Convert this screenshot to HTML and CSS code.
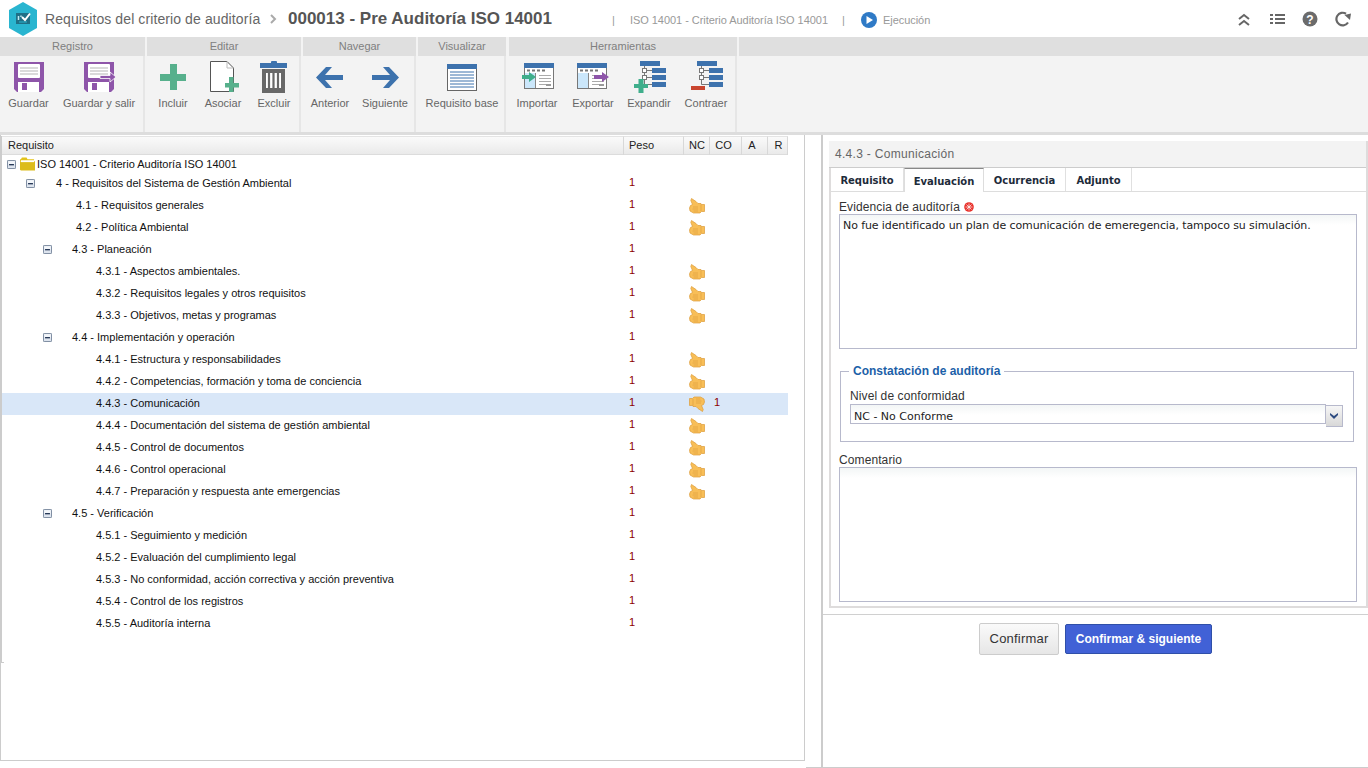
FILE: index.html
```html
<!DOCTYPE html>
<html lang="es">
<head>
<meta charset="utf-8">
<title>Requisitos del criterio de auditoría</title>
<link rel="stylesheet" href="styles.css">
</head>
<body>
<svg class="defs" aria-hidden="true">
  <symbol id="thumb" viewBox="0 0 16 16">
    <path d="M2.5 .5 L7 3.5 L9 5.5 H12 V6.5 H15.5 V13.5 H12.5 L11 15 H4.5 L1 13 L.5 10 L1.500 7.500 L3.500 6.500 L1.800 2.500 Z" fill="#f8be57" stroke="#dd9c3a" stroke-width=".7"/>
    <path d="M4 9 H9 M3.500 11 H9 M4.500 13 H9 M12 7 V13" stroke="#e0a23f" stroke-width=".7" fill="none"/>
  </symbol>
  <symbol id="minus" viewBox="0 0 11 11">
    <rect x=".5" y=".5" width="10" height="10" rx="1" fill="#dde4ee" stroke="#5d6f88"/>
    <rect x="1.500" y="1.500" width="8" height="4" fill="#f3f6fa"/>
    <rect x="2.500" y="5" width="6" height="1.500" fill="#16294a"/>
  </symbol>
  <symbol id="floppy" viewBox="0 0 30 30">
    <path d="M0 0 H30 V27 L27 30 H3 L0 27 Z" fill="#8e55a9"/>
    <rect x="4" y="2" width="22" height="14" rx="1" fill="#fff"/>
    <path d="M6 6 H24 M6 9 H24 M6 12 H24" stroke="#b5b5b5"/>
    <rect x="4" y="20" width="21" height="10" fill="#fff"/>
    <rect x="8" y="21" width="5" height="7" fill="#8e55a9"/>
  </symbol>
  <symbol id="grid" viewBox="0 0 30 26">
    <rect x=".5" y=".5" width="29" height="25" fill="#fff" stroke="#777"/>
    <rect x="0" y="0" width="30" height="5" fill="#3d72ad"/>
    <path d="M3 7.500 H6 M8 7.500 H11 M13 7.500 H16 M18 7.500 H21" stroke="#777" stroke-width="2"/>
    <rect x="1" y="10" width="10" height="15" fill="#cbe7fb"/>
    <path d="M11.500 10 V25" stroke="#888"/>
    <path d="M15 12.500 H27 M15 15.500 H27 M15 18.500 H27 M15 21.500 H22" stroke="#aaa"/>
    <rect x="22" y="21" width="5" height="2" fill="#999"/>
  </symbol>
  <symbol id="tree" viewBox="0 0 26 28">
    <rect x="0" y="0" width="20" height="5" fill="#3d72ad"/>
    <path d="M4.500 5 V23.500 M4.500 9.500 H12 M4.500 16.500 H12 M4.500 23.500 H12" stroke="#777" fill="none"/>
    <rect x="2.500" y="7.500" width="4" height="4" fill="#fff" stroke="#777"/>
    <rect x="2.500" y="14.500" width="4" height="4" fill="#fff" stroke="#777"/>
    <rect x="12" y="7" width="14" height="5" fill="#3d72ad"/>
    <rect x="12" y="14" width="14" height="5" fill="#3d72ad"/>
    <rect x="12" y="21" width="14" height="5" fill="#3d72ad"/>
  </symbol>
</svg>

<header class="topbar">
  <svg class="logo" viewBox="0 0 30 34">
    <path d="M15 0 L29 8 V26 L15 34 L1 26 V8 Z" fill="#29b5d0"/>
    <rect x="8" y="11" width="14" height="11" fill="#1f6f86"/>
    <path d="M11 20 H19" stroke="#29b5d0" stroke-width="1"/>
    <path d="M10.500 14 V18 M13 13.500 V15" stroke="#bfeaf3" stroke-width="1.500"/>
    <path d="M14 15 L17 18 L22 11.500" stroke="#fff" stroke-width="2" fill="none"/>
  </svg>
  <span class="page-title">Requisitos del criterio de auditoría</span>
  <svg class="crumb" viewBox="0 0 7 10"><path d="M1 1 L5 5 L1 9" fill="none" stroke="#aaa" stroke-width="2"/></svg>
  <span class="record-title">000013 - Pre Auditoría ISO 14001</span>
  <span class="meta pipe-one">|</span>
  <span class="meta criteria">ISO 14001 - Criterio Auditoría ISO 14001</span>
  <span class="meta pipe-two">|</span>
  <svg class="status-icon" viewBox="0 0 16 16"><circle cx="8" cy="8" r="8" fill="#2f7ac6"/><path d="M5.500 4 L12 8 L5.500 12 Z" fill="#fff"/></svg>
  <span class="meta status">Ejecución</span>
  <div class="top-actions">
    <svg class="top-icon" viewBox="0 0 16 16"><path d="M3 8 L8 4 L13 8 M3 14 L8 10 L13 14" fill="none" stroke="#666" stroke-width="2"/></svg>
    <svg class="top-icon" viewBox="0 0 16 16"><path d="M1 4 H4 M6 4 H16 M1 8 H4 M6 8 H16 M1 12 H4 M6 12 H16" fill="none" stroke="#666" stroke-width="2"/></svg>
    <svg class="top-icon" viewBox="0 0 16 16"><circle cx="8" cy="8" r="7.500" fill="#6b6b6b"/><text x="8" y="12.500" text-anchor="middle" class="help-mark">?</text></svg>
    <svg class="top-icon" viewBox="0 0 16 16"><path d="M13 11.500 A6.300 6.300 0 1 1 11 2.700" fill="none" stroke="#666" stroke-width="2.200"/><path d="M9.500 4 L16 2.500 L15 9 Z" fill="#666"/></svg>
  </div>
</header>

<nav class="toolbar">
  <section class="group group-registro">
    <h2 class="group-head">Registro</h2>
    <div class="group-body">
      <div class="tool w57"><svg class="tool-icon"><use href="#floppy" x="1" y="2" width="30" height="30"/></svg><span>Guardar</span></div>
      <div class="tool w84"><svg class="tool-icon"><use href="#floppy" x="1" y="2" width="30" height="30"/><path d="M17 15.500 H27 V12 L33 17 L27 22 V18.500 H17 Z" fill="#8e55a9" stroke="#fff" stroke-width=".8"/></svg><span>Guardar y salir</span></div>
    </div>
  </section>
  <section class="group group-editar">
    <h2 class="group-head">Editar</h2>
    <div class="group-body">
      <div class="tool w52"><svg class="tool-icon"><path d="M13 4 H20 V14 H29 V21 H20 V30 H13 V21 H3 V14 H13 Z" fill="#57b08c"/></svg><span>Incluir</span></div>
      <div class="tool w48"><svg class="tool-icon"><path d="M3.500 1.500 H20 L26.500 8 V31.500 H3.500 Z" fill="#fff" stroke="#555"/><path d="M20 1.500 V8 H26.500" fill="none" stroke="#bbb"/><path d="M22 17 H26.500 V23 H32 V27.500 H26.500 V32 H22 V27.500 H18 V23 H22 Z" fill="#57b08c"/></svg><span>Asociar</span></div>
      <div class="tool w54"><svg class="tool-icon"><rect x="2" y="3" width="27" height="5" fill="#3d72ad"/><rect x="13" y="1" width="6" height="3" rx="1" fill="#3d72ad"/><path d="M4 9 H27 V33 H4 Z" fill="#686868"/><rect x="8" y="13" width="15" height="15" fill="#fff"/><path d="M11 13 V28 M15.500 13 V28 M20 13 V28" stroke="#686868" stroke-width="2.200"/></svg><span>Excluir</span></div>
    </div>
  </section>
  <section class="group group-navegar">
    <h2 class="group-head">Navegar</h2>
    <div class="group-body">
      <div class="tool w54"><svg class="tool-icon"><path d="M2 17.500 L12 7 H18 L11 15 H29 V20 H11 L18 28 H12 Z" fill="#3d72ad"/></svg><span>Anterior</span></div>
      <div class="tool w56"><svg class="tool-icon"><path d="M30 17.500 L20 7 H14 L21 15 H3 V20 H21 L14 28 H20 Z" fill="#3d72ad"/></svg><span>Siguiente</span></div>
    </div>
  </section>
  <section class="group group-visualizar">
    <h2 class="group-head">Visualizar</h2>
    <div class="group-body">
      <div class="tool w88"><svg class="tool-icon"><rect x="1.500" y="4.500" width="29" height="26" fill="#fff" stroke="#666"/><rect x="1" y="4" width="30" height="5" fill="#3d72ad"/><path d="M4 12 H28 M4 15 H28 M4 18 H28 M4 21 H28 M4 24 H28 M4 27 H28" stroke="#3d72ad"/></svg><span>Requisito base</span></div>
    </div>
  </section>
  <section class="group group-herramientas">
    <h2 class="group-head">Herramientas</h2>
    <div class="group-body">
      <div class="tool w56"><svg class="tool-icon"><use href="#grid" x="3" y="3" width="30" height="26"/><path d="M1 15 H8 V12 L15 17 L8 22 V19 H1 Z" fill="#3fae8b"/></svg><span>Importar</span></div>
      <div class="tool w56"><svg class="tool-icon"><use href="#grid" x="0" y="3" width="30" height="26"/><path d="M17 15 H25 V12 L32 17 L25 22 V19 H17 Z" fill="#8e55a9"/></svg><span>Exportar</span></div>
      <div class="tool w56"><svg class="tool-icon"><use href="#tree" x="7" y="1" width="26" height="28"/><path d="M5.500 19 H10.500 V24 H15 V28 H10.500 V33 H5.500 V28 H1 V24 H5.500 Z" fill="#3fae8b"/></svg><span>Expandir</span></div>
      <div class="tool w58"><svg class="tool-icon"><use href="#tree" x="7" y="1" width="26" height="28"/><rect x="1" y="26" width="14" height="4" fill="#c9452f"/></svg><span>Contraer</span></div>
    </div>
  </section>
  <div class="group group-rest"><div class="group-head"></div></div>
</nav>

<main class="split">
  <div class="list-pane">
    <div class="tree">
      <div class="row head"><div>Requisito</div><div>Peso</div><div>NC</div><div>CO</div><div>A</div><div>R</div></div>
      <div class="row root"><div class="name lv0"><svg class="toggle"><use href="#minus"/></svg><svg class="folder" viewBox="0 0 16 14"><path d="M0 2 H1 L2 0 H7 L8 2 H15 V4 H0 Z" fill="#e3c31b"/><path d="M0 4 H16 V14 H1 L0 13 Z" fill="#dcbc1a"/><path d="M1 3 H15 V5 H1 Z" fill="#fff"/></svg>ISO 14001 - Criterio Auditoría ISO 14001</div></div>
      <div class="row"><div class="name lv1"><svg class="toggle"><use href="#minus"/></svg>4 - Requisitos del Sistema de Gestión Ambiental</div><div class="peso">1</div></div>
      <div class="row"><div class="name lv1-leaf">4.1 - Requisitos generales</div><div class="peso">1</div><div class="nc"><svg class="thumb"><use href="#thumb"/></svg></div></div>
      <div class="row"><div class="name lv1-leaf">4.2 - Política Ambiental</div><div class="peso">1</div><div class="nc"><svg class="thumb"><use href="#thumb"/></svg></div></div>
      <div class="row"><div class="name lv2"><svg class="toggle"><use href="#minus"/></svg>4.3 - Planeación</div><div class="peso">1</div></div>
      <div class="row"><div class="name lv3">4.3.1 - Aspectos ambientales.</div><div class="peso">1</div><div class="nc"><svg class="thumb"><use href="#thumb"/></svg></div></div>
      <div class="row"><div class="name lv3">4.3.2 - Requisitos legales y otros requisitos</div><div class="peso">1</div><div class="nc"><svg class="thumb"><use href="#thumb"/></svg></div></div>
      <div class="row"><div class="name lv3">4.3.3 - Objetivos, metas y programas</div><div class="peso">1</div><div class="nc"><svg class="thumb"><use href="#thumb"/></svg></div></div>
      <div class="row"><div class="name lv2"><svg class="toggle"><use href="#minus"/></svg>4.4 - Implementación y operación</div><div class="peso">1</div></div>
      <div class="row"><div class="name lv3">4.4.1 - Estructura y responsabilidades</div><div class="peso">1</div><div class="nc"><svg class="thumb"><use href="#thumb"/></svg></div></div>
      <div class="row"><div class="name lv3">4.4.2 - Competencias, formación y toma de conciencia</div><div class="peso">1</div><div class="nc"><svg class="thumb"><use href="#thumb"/></svg></div></div>
      <div class="row selected"><div class="name lv3">4.4.3 - Comunicación</div><div class="peso">1</div><div class="nc"><svg class="thumb down"><use href="#thumb"/></svg></div><div class="peso co">1</div></div>
      <div class="row"><div class="name lv3">4.4.4 - Documentación del sistema de gestión ambiental</div><div class="peso">1</div><div class="nc"><svg class="thumb"><use href="#thumb"/></svg></div></div>
      <div class="row"><div class="name lv3">4.4.5 - Control de documentos</div><div class="peso">1</div><div class="nc"><svg class="thumb"><use href="#thumb"/></svg></div></div>
      <div class="row"><div class="name lv3">4.4.6 - Control operacional</div><div class="peso">1</div><div class="nc"><svg class="thumb"><use href="#thumb"/></svg></div></div>
      <div class="row"><div class="name lv3">4.4.7 - Preparación y respuesta ante emergencias</div><div class="peso">1</div><div class="nc"><svg class="thumb"><use href="#thumb"/></svg></div></div>
      <div class="row"><div class="name lv2"><svg class="toggle"><use href="#minus"/></svg>4.5 - Verificación</div><div class="peso">1</div></div>
      <div class="row"><div class="name lv3">4.5.1 - Seguimiento y medición</div><div class="peso">1</div></div>
      <div class="row"><div class="name lv3">4.5.2 - Evaluación del cumplimiento legal</div><div class="peso">1</div></div>
      <div class="row"><div class="name lv3">4.5.3 - No conformidad, acción correctiva y acción preventiva</div><div class="peso">1</div></div>
      <div class="row"><div class="name lv3">4.5.4 - Control de los registros</div><div class="peso">1</div></div>
      <div class="row"><div class="name lv3">4.5.5 - Auditoría interna</div><div class="peso">1</div></div>
    </div>
  </div>

  <div class="detail-col">
    <div class="detail-pane">
      <div class="detail-box">
        <div class="detail-title">4.4.3 - Comunicación</div>
        <div class="tabs">
          <div class="tab t-req">Requisito</div>
          <div class="tab t-eva active">Evaluación</div>
          <div class="tab t-ocu">Ocurrencia</div>
          <div class="tab t-adj">Adjunto</div>
        </div>
        <div class="form">
          <label class="label">Evidencia de auditoría <svg class="required" viewBox="0 0 10 10"><circle cx="5" cy="5" r="4.800" fill="#e8302a"/><path d="M5 1.500 V8.500 M1.500 5 H8.500 M2.500 2.500 L7.500 7.500 M7.500 2.500 L2.500 7.500" stroke="#fff" stroke-width=".7"/></svg></label>
          <div class="area">No fue identificado un plan de comunicación de emeregencia, tampoco su simulación.</div>
          <fieldset class="finding">
            <legend>Constatación de auditoría</legend>
            <div class="label inner-label">Nivel de conformidad</div>
            <div class="select-line">
              <div class="select-field">NC - No Conforme</div>
              <div class="select-btn"><svg viewBox="0 0 10 6"><path d="M1 0 L5 3 L9 0 V2 L5 6 L1 2 Z" fill="#2c4a80"/></svg></div>
            </div>
          </fieldset>
          <div class="label comment-label">Comentario</div>
          <div class="area"></div>
        </div>
      </div>
      <div class="actions">
        <button class="btn btn-plain">Confirmar</button>
        <button class="btn btn-primary">Confirmar &amp; siguiente</button>
      </div>
    </div>
  </div>
</main>
</body>
</html>
```
FILE: styles.css
```css
* { box-sizing: border-box; }
html, body { margin: 0; height: 768px; overflow: hidden; }
body {
  display: flex;
  flex-direction: column;
  background: #fff;
  font-family: "Liberation Sans", Arial, sans-serif;
  color: #111;
}
.defs { position: absolute; width: 0; height: 0; }

/* top bar */
.topbar { height: 37px; display: flex; align-items: center; flex: none; }
.logo { width: 30px; height: 34px; margin: 0 7px 0 8px; flex: none; }
.page-title { font-size: 14px; color: #666; width: 216px; letter-spacing: .1px; white-space: nowrap; }
.crumb { width: 7px; height: 10px; margin: 0 11px 0 9px; flex: none; }
.record-title { font-size: 17px; font-weight: bold; color: #555; width: 324px; white-space: nowrap; }
.meta { font-size: 11px; letter-spacing: -.05px; color: #999; white-space: nowrap; padding-top: 2px; }
.criteria { width: 212px; margin-left: 15px; }
.pipe-one { width: 3px; }
.pipe-two { width: 19px; }
.status-icon { width: 16px; height: 16px; margin: 2px 6px 0 0; flex: none; }
.status { width: 48px; }
.top-actions { margin-left: auto; margin-right: 17px; display: flex; gap: 17px; align-items: center; }
.top-icon { width: 16px; height: 16px; display: block; }
.help-mark { font: bold 12px "Liberation Sans", sans-serif; fill: #fff; }

/* toolbar */
.toolbar { height: 95px; flex: none; display: flex; background: #f3f3f3; border-bottom: 0; }
.group { display: flex; flex-direction: column; flex: none; }
.group-registro { width: 145px; margin-right: 2px; }
.group-editar { width: 154px; margin-right: 2px; }
.group-navegar { width: 113px; margin-right: 2px; }
.group-visualizar { width: 88px; margin-right: 3px; }
.group-herramientas { width: 228px; margin-right: 2px; }
.group-rest { flex: 1; }
.group-head {
  margin: 0; height: 19px; background: #dfdfdf; color: #808080;
  font-size: 11px; font-weight: normal; line-height: 19px; text-align: center; flex: none;
}
.group-body { flex: 1; display: flex; border-right: 2px solid #e6e6e6; }
.tool { flex: none; display: flex; flex-direction: column; align-items: center; font-size: 11px; color: #666; white-space: nowrap; }
.tool-icon { width: 32px; height: 34px; margin-top: 4px; overflow: visible; flex: none; }
.tool span { margin-top: 2px; line-height: 14px; }
.w48 { width: 48px; } .w52 { width: 52px; } .w54 { width: 54px; } .w56 { width: 56px; }
.w57 { width: 57px; } .w58 { width: 58px; } .w84 { width: 84px; } .w88 { width: 88px; }

/* split */
.split { flex: 1; display: flex; border-top: 3px solid #dddddd; min-height: 0; }
.list-pane {
  width: 805px; flex: none; height: 626px;
  border-left: 1px solid #ccc; border-right: 1px solid #ccc; border-bottom: 1px solid #ccc;
  padding-top: 1px;
}
.tree { width: 787px; position: relative; border-left: 1px solid #ccc; height: 527px; }
.tree::after { content: ""; position: absolute; left: -1px; bottom: 0; width: 3px; height: 1px; background: #ccc; }
.row {
  display: grid; grid-template-columns: 622px 60px 26px 32px 26px 20px;
  height: 22px; align-items: center; font-size: 11px; line-height: 14px;
}
.row > div { margin-top: -2px; }
.row.root { height: 18px; }
.row.root > div { margin-top: 0; }
.row.head { height: 19px; background: linear-gradient(#fbfbfb, #eaeaea); border-bottom: 1px solid #dcdcdc; color: #222; }
.row.head > div { height: 19px; margin-top: 0; line-height: 17px; border-right: 1px solid #d8d8d8; border-top: 1px solid #e4e4e4; }
.row.head > div:first-child { padding-left: 6px; }
.row.head > div:nth-child(2) { padding-left: 5px; }
.row.head > div:nth-child(n+3) { text-align: center; }
.row.head > div:nth-child(3) { padding-left: 1px; }
.row.head > div:nth-child(4) { padding-right: 4px; }
.row.head > div:nth-child(5) { padding-right: 5px; }
.row.head > div:nth-child(6) { padding-left: 2px; }
.selected { background: #d9e7f8; }
.name { display: flex; align-items: center; white-space: nowrap; }
.lv0 { padding-left: 5px; }
.lv1 { padding-left: 24px; }
.lv1-leaf { padding-left: 74px; }
.lv2 { padding-left: 41px; }
.lv3 { padding-left: 94px; }
.toggle { width: 9px; height: 9px; flex: none; }
.lv0 .toggle { margin-right: 4px; }
.lv1 .toggle { margin-right: 21px; }
.lv2 .toggle { margin-right: 20px; }
.folder { width: 15px; height: 14px; margin-right: 2px; flex: none; }
.row > .peso { color: #8b0000; padding-left: 5px; margin-top: -4px; }
.row > .co { padding-left: 4px; }
.nc { display: flex; padding-left: 5px; }
.thumb { width: 16px; height: 16px; display: block; margin-top: 1px; }
.thumb.down { transform: scale(-1, -1); }

/* detail */
.detail-col { flex: 1; margin-left: 1px; padding-left: 15px; border-bottom: 1px solid #ccc; height: 633px; display: flex; }
.detail-pane { flex: 1; border-left: 2px solid #ccc; padding-top: 6px; }
.detail-box {
  margin-left: 6px; margin-right: 0; height: 467px;
  border-left: 2px solid #dedcdc; border-right: 2px solid #dedcdc; border-bottom: 2px solid #dedcdc;
}
.detail-title { height: 27px; margin-left: -2px; background: #f3f3f3; border-bottom: 1px solid #ccc; font-size: 12px; letter-spacing: .3px; color: #666; line-height: 26px; padding-left: 6px; font-weight: normal; }
.tabs { height: 24px; display: flex; border-bottom: 1px solid #ddd; }
.tab { height: 23px; font: bold 10px/25px "DejaVu Sans", sans-serif; text-align: center; color: #1d2b3a; border-right: 1px solid #e0e0e0; }
.t-req { width: 73px; }
.t-eva { width: 80px; height: 24px; background: #fff; border-top: 1px solid #888; border-left: 1px solid #ddd; border-right: 1px solid #ddd; line-height: 25px; }
.t-ocu { width: 82px; }
.t-adj { width: 66px; }
.form { padding: 8px 8px 0 8px; }
.label { display: block; font-size: 12px; line-height: 14px; color: #333; letter-spacing: .1px; }
.required { width: 10px; height: 10px; display: inline-block; vertical-align: -1px; margin-left: 1px; }
.area {
  width: 518px; height: 135px;
  border: 1px solid #b7b9cc; background: linear-gradient(#f3f6f6, #fff 10px);
  font: 11px/22px "DejaVu Sans", sans-serif; letter-spacing: -.1px; color: #222; padding: 0 3px;
}
.finding { width: 514px; height: 78px; margin: 15px 0 0 1px; padding: 11px 10px 0 9px; border: 1px solid #b7b9cc; min-width: 0; }
.finding legend { margin-left: -1px; padding: 0 4px; font-size: 12px; font-weight: bold; color: #1c5fa8; line-height: 14px; }
.inner-label { margin-bottom: 1px; }
.select-line { display: flex; align-items: flex-start; }
.select-field {
  width: 477px; height: 20px; border: 1px solid #b7b9cc; border-right-width: 1px;
  background: linear-gradient(#f3f6f6, #fff 10px);
  font: 11px/24px "DejaVu Sans", sans-serif; padding-left: 3px; color: #222; overflow: hidden;
}
.select-btn {
  width: 17px; height: 22px; margin-top: 1px; border: 1px solid #b7b9cc; border-left: 0;
  background: linear-gradient(#f6f6f6, #d8d8d8); display: flex; align-items: center; justify-content: center;
}
.select-btn svg { width: 10px; height: 6px; }
.comment-label { margin-top: 11px; }

.actions { height: 146px; margin-top: 6px; border-top: 1px solid #d0d0d0; padding: 8px 0 0 156px; display: flex; gap: 6px; align-items: flex-start; }
.btn { font: 12px "Liberation Sans", sans-serif; height: 32px; border-radius: 2px; cursor: pointer; padding: 0; }
.btn-plain { width: 80px; padding-bottom: 2px; border: 1px solid #ccc; background: linear-gradient(#fafafa, #e6e6e6); color: #333; font-size: 13px; letter-spacing: .2px; }
.btn-primary { width: 147px; height: 30px; margin-top: 1px; border: 1px solid #2f4fa8; background: #4161d6; color: #fff; font-weight: bold; }
```
